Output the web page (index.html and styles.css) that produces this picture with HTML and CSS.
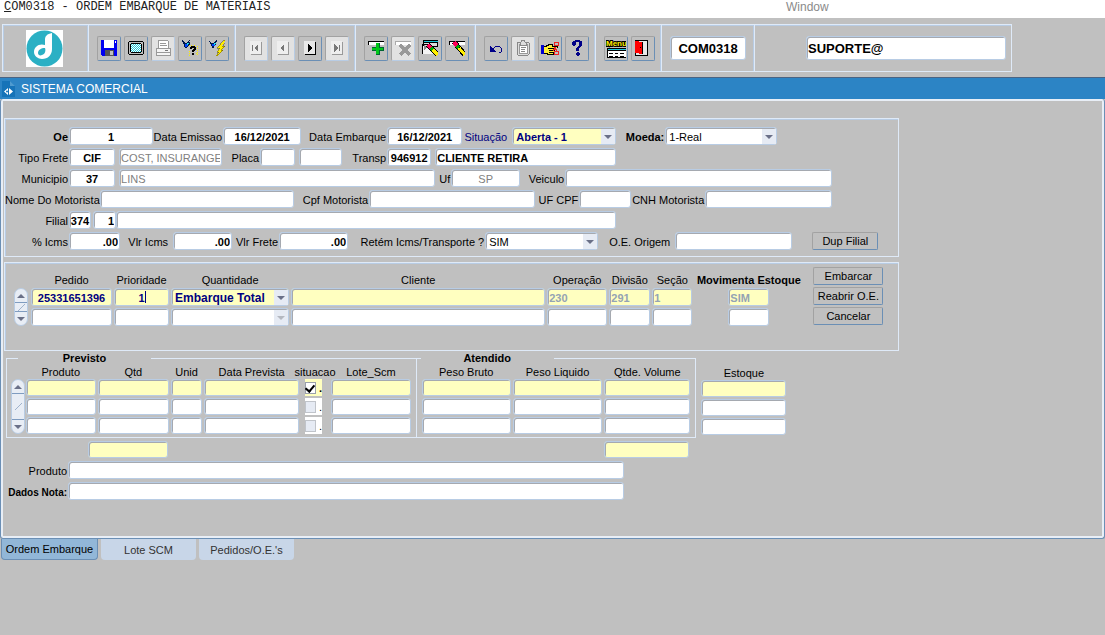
FILE: index.html
```html
<!DOCTYPE html>
<html lang="pt-BR">
<head>
    <meta charset="UTF-8">
    <meta name="viewport" content="width=device-width, initial-scale=1.0">
    <title>COM0318 - ORDEM EMBARQUE DE MATERIAIS</title>
    <link rel="stylesheet" href="styles.css">
</head>
<body>
    <header class="menubar">
        <span class="menu-title"><u>C</u>OM0318 - ORDEM EMBARQUE DE MATERIAIS</span>
        <a href="#" class="menu-window">Window</a>
    </header>

    <div class="toolbar">
        <div class="segment segment-logo">
            <svg class="logo" viewBox="0 0 37 37">
                <rect width="37" height="37" fill="#fff"/>
                <circle cx="18.500" cy="18.500" r="18" fill="#2bb0c4"/>
                <path d="M26 3c-5 1-7 3-7 7v5c-6-2-11 2-11 7 0 4 4 7 8 7 6 0 10-4 10-10V3z" fill="#fff"/>
                <path d="M19 18c-4 0-7 2-7 5 0 2 2 3 4 2 3-1 4-4 3-7z" fill="#2bb0c4"/>
            </svg>
        </div>
        <div class="segment">
            <button class="tool" aria-label="Salvar"><svg viewBox="0 0 16 16">
                <path d="M0 0h16v16H1L0 15z" fill="#0000f0"/><path d="M3 0h10v8H3z" fill="#fff"/><path d="M14 1h1v2h-1z" fill="#fff"/>
                <path d="M4 10h9v6H4z" fill="#555"/><path d="M9 11h3v4H9z" fill="#c0c0c0"/>
            </svg></button>
            <button class="tool" aria-label="Tela"><svg viewBox="0 0 16 16">
                <path d="M1 1h14v1h1v12h-1v1H1v-1H0V2h1z" fill="#000"/><path d="M1 2h14v12H1z" fill="#c0c0c0"/>
                <path d="M3 3h10v1h1v8h-1v1H3v-1H2V4h1z" fill="#000"/><path d="M3 4h10v8H3z" fill="#fff"/>
                <path d="M3 4.500h10M3 6.500h10M3 8.500h10M3 10.500h10" stroke="#20c8d8" stroke-dasharray="1 1"/>
                <path d="M4 5.500h9M4 7.500h9M4 9.500h9M4 11.500h9" stroke="#20c8d8" stroke-dasharray="1 1"/>
            </svg></button>
            <button class="tool off" aria-label="Imprimir" disabled><svg viewBox="0 0 16 16">
                <path d="M3 0h10v8H3z" fill="#fff"/><path d="M3 0h10M3 0v8M13 1v7M5 3h6M5 5h7" stroke="#999"/>
                <path d="M1 8h14v7H1z" fill="#f4f4f4" stroke="#999"/><path d="M1 12h14" stroke="#999"/><path d="M10 10h3" stroke="#777"/>
            </svg></button>
            <button class="tool" aria-label="Consulta"><svg viewBox="0 0 16 16">
                <path d="M7 5h1v1H7zM9 5h1v1H9zM12 5h1v1h-1zM15 6h1v1h-1zM15 8h1v1h-1zM15 10h1v1h-1zM15 12h1v1h-1zM15 14h1v1h-1zM7 11h1v1H7zM7 13h1v1H7zM7 15h1v1H7zM14 13h1v1h-1z" fill="#ffee00"/>
                <path d="M0 0h1v1h1v1h1v1h2V2h1V1h1V0h1v1H7v1h1v3H7v1H6v1H5v1H3V7H2V4H1V2H0z" fill="#001850"/><path d="M3 4h3v2H5v1H3z" fill="#0040ff"/><path d="M5 3h2v1H6v1H5z" fill="#19e0f0"/>
                <path d="M8 7h1V6h4v1h1v3h-1v1h-1v1h-2v-2h1V9h1V8h-2v1H8zM10 13h2v2h-2z" fill="#000"/>
            </svg></button>
            <button class="tool" aria-label="Executar"><svg viewBox="0 0 16 16">
                <path d="M0 1h1v1h1v1h3V2h1V1h1V0h1v2H7v3H6v1H5v2H3V6H2V4H1V2H0z" fill="#001850"/><path d="M3 4h3v2H3z" fill="#0040ff"/><path d="M5 3h2v1H6v1H5z" fill="#19e0f0"/>
                <path d="M15 0L8 8h3l-3 4h2l-3 4h1l6-6h-2l4-4h-3l4-6z" fill="#ffee00" stroke="#554400" stroke-width=".5"/>
            </svg></button>
        </div>
        <div class="segment">
            <button class="tool off" aria-label="Primeiro" disabled><svg viewBox="0 0 16 16">
                <path d="M3 2h11v13H3z" fill="#999"/><path d="M2 1h11v13H2z" fill="#eee"/><path d="M4 5h1v6H4zM10 4v8L6 8z" fill="#777"/>
            </svg></button>
            <button class="tool off" aria-label="Anterior" disabled><svg viewBox="0 0 16 16">
                <path d="M3 2h11v13H3z" fill="#999"/><path d="M2 1h11v13H2z" fill="#eee"/><path d="M9 4v8L5 8z" fill="#777"/>
            </svg></button>
            <button class="tool" aria-label="Próximo"><svg viewBox="0 0 16 16">
                <path d="M3 2h11v13H3z" fill="#000"/><path d="M2 1h11v13H2z" fill="#e8e8e8"/><path d="M6 4v8l4-4z" fill="#000"/>
            </svg></button>
            <button class="tool off" aria-label="Último" disabled><svg viewBox="0 0 16 16">
                <path d="M3 2h11v13H3z" fill="#999"/><path d="M2 1h11v13H2z" fill="#eee"/><path d="M10 5h1v6h-1zM5 4v8l4-4z" fill="#777"/>
            </svg></button>
        </div>
        <div class="segment">
            <button class="tool" aria-label="Inserir"><svg viewBox="0 0 16 16">
                <path d="M0 1h16v4H0z" fill="#000"/><path d="M1 2h15v3H1z" fill="#fff"/>
                <path d="M8 3h4v4h4v4h-4v4H8v-4H4V7h4z" fill="#063"/><path d="M8 3h3v5h4v2h-4v4H8v-4H4V8h4z" fill="#00c818"/>
            </svg></button>
            <button class="tool off" aria-label="Remover" disabled><svg viewBox="0 0 16 16">
                <path d="M0 1h16v4H0z" fill="#aaa"/><path d="M1 2h15v3H1z" fill="#fff"/>
                <path d="M5 5l10 10M15 5L5 15" stroke="#999" stroke-width="3"/>
            </svg></button>
            <button class="tool" aria-label="Limpar registro"><svg viewBox="0 0 16 16">
                <path d="M1 0h15v7H1z" fill="#000"/><path d="M2 1h14v1H2z" fill="#19c8dc"/><path d="M2 3h13v3H2z" fill="#ddd"/>
                <path d="M0 4h6v1H1v9H0z" fill="#000"/><path d="M1 6h10v8H1z" fill="#f4f4f4"/><path d="M2 5l4 2-4 3z" fill="#888"/>
                <path d="M6 5l10 10" stroke="#000" stroke-width="5"/><path d="M6 5l3 3" stroke="#f05" stroke-width="4"/><path d="M9 8l2 2" stroke="#0a0" stroke-width="4"/><path d="M11 10l5 5" stroke="#fe0" stroke-width="3"/>
            </svg></button>
            <button class="tool" aria-label="Limpar"><svg viewBox="0 0 16 16">
                <path d="M0 1h16v4H0z" fill="#000"/><path d="M1 2h15v3H1z" fill="#fff"/>
                <path d="M5 2l11 13" stroke="#000" stroke-width="5"/><path d="M5 2l3 4" stroke="#f05" stroke-width="4"/><path d="M8 6l2 2" stroke="#0a0" stroke-width="4"/><path d="M10 8l6 7" stroke="#fe0" stroke-width="3"/>
            </svg></button>
        </div>
        <div class="segment">
            <button class="tool" aria-label="Desfazer"><svg viewBox="0 0 16 16">
                <path d="M2 6v6h6z" fill="#008"/><path d="M4 10l4-4h3l2 2v4l-2 1" fill="none" stroke="#008" stroke-width="1"/>
            </svg></button>
            <button class="tool off" aria-label="Colar" disabled><svg viewBox="0 0 16 16">
                <rect x="2" y="2" width="12" height="13" rx="1" fill="#ddd" stroke="#888"/><path d="M4 4h8v9H4z" fill="#fff" stroke="#999"/>
                <path d="M5 2h1l1-2h2l1 2h1v3H5z" fill="#ddd" stroke="#888"/><path d="M6 7h5M6 9h4M6 11h4" stroke="#888"/>
            </svg></button>
            <button class="tool" aria-label="Recortar"><svg class="broad" viewBox="0 0 18 16">
                <path d="M0 5h3v9H0z" fill="#0000d0"/><path d="M3 6h2l2-2h4v2h5v2h-3v5l-2 2H6l-3-2z" fill="#fe3"/>
                <path d="M3 6h2V5h2V4h4v2h5v2M7 8h6v2H8M8 12h4v2H6v-1H3" fill="none" stroke="#000"/>
                <path d="M12 11l3-4M13 7l3 4" stroke="#e22"/><circle cx="15.500" cy="4" r="2" fill="none" stroke="#e22"/><circle cx="15.500" cy="13" r="2" fill="none" stroke="#e22"/>
            </svg></button>
            <button class="tool" aria-label="Ajuda"><svg viewBox="0 0 16 16">
                <path d="M4 1h2V0h5v1h2v5h-1v1h-1v1h-1v3H7V8h1V7h1V6h1V2H7v3H6v1H4V5H3V2h1zM7 13h1v-1h2v1h1v2h-1v1H8v-1H7z" fill="#008"/>
            </svg></button>
        </div>
        <div class="segment">
            <button class="tool" aria-label="Menu"><svg class="wide" viewBox="0 0 20 20">
                <text x="0" y="8" class="menu-glyph">Menu</text>
                <path d="M1 10h19v10H1z" fill="#000"/><path d="M2 11h18v1H2z" fill="#19c8dc"/><path d="M2 13h18v6H2z" fill="#fff"/>
                <path d="M3 15h4M9 15h3M14 15h4M3 18h4M9 18h3M14 18h4" stroke="#000"/>
            </svg></button>
            <button class="tool" aria-label="Sair"><svg viewBox="0 0 16 16">
                <path d="M0 0h13v16H0z" fill="#000"/><path d="M1 1h11v14H1z" fill="#e8e8e8"/><path d="M0 1l7 1v12l-7-1z" fill="#f00"/><path d="M7 2h1v12H7z" fill="#000"/><path d="M5 7h1v1H5z" fill="#000"/>
            </svg></button>
        </div>
        <div class="segment segment-code">
            <input type="text" class="field bold center" aria-label="Programa" value="COM0318">
        </div>
        <div class="segment segment-user">
            <input type="text" class="field bold" aria-label="Usuário" value="SUPORTE@">
        </div>
    </div>

    <main class="window">
        <h1 class="window-title">
            <svg class="window-icon" viewBox="0 0 13 16">
                <path d="M0 0h8l5 5v11H0z" fill="#1673b8"/><path d="M8 0v5h5z" fill="#4f9bd0"/>
                <path d="M6 7v7L2 10.500zM7 7v7l4-3.500z" fill="#fff"/><circle cx="5" cy="10.500" r="1" fill="#1673b8"/>
            </svg>
            SISTEMA COMERCIAL
        </h1>

        <form class="frame">
            <section class="group header-group">
                <div class="row row-1">
                    <label for="oe" class="strong">Oe</label>
                    <input id="oe" class="field bold center" value="1">
                    <label for="emissao">Data Emissao</label>
                    <input id="emissao" class="field bold center" value="16/12/2021">
                    <label for="embarque">Data Embarque</label>
                    <input id="embarque" class="field bold center" value="16/12/2021">
                    <label for="situacao" class="navy loose">Situação</label>
                    <span class="select"><select id="situacao" class="field bold yellow navy"><option>Aberta - 1</option></select></span>
                    <label for="moeda" class="strong">Moeda:</label>
                    <span class="select"><select id="moeda" class="field"><option>1-Real</option></select></span>
                </div>
                <div class="row row-2">
                    <label for="frete">Tipo Frete</label>
                    <input id="frete" class="field bold center" value="CIF">
                    <span></span>
                    <input class="field faded" aria-label="Descrição do frete" value="COST, INSURANGE">
                    <label for="placa">Placa</label>
                    <input id="placa" class="field">
                    <span></span>
                    <input class="field" aria-label="UF da placa">
                    <label for="transp">Transp</label>
                    <input id="transp" class="field bold center" value="946912">
                    <span></span>
                    <input class="field bold" aria-label="Nome da transportadora" value="CLIENTE RETIRA">
                </div>
                <div class="row row-3">
                    <label for="municipio">Municipio</label>
                    <input id="municipio" class="field bold center" value="37">
                    <span></span>
                    <input class="field faded" aria-label="Nome do municipio" value="LINS">
                    <label for="uf">Uf</label>
                    <input id="uf" class="field faded center" value="SP">
                    <label for="veiculo">Veiculo</label>
                    <input id="veiculo" class="field">
                </div>
                <div class="row row-4">
                    <label for="motorista">Nome Do Motorista</label>
                    <input id="motorista" class="field">
                    <label for="cpf">Cpf Motorista</label>
                    <input id="cpf" class="field">
                    <label for="ufcpf">UF CPF</label>
                    <input id="ufcpf" class="field">
                    <label for="cnh">CNH Motorista</label>
                    <input id="cnh" class="field">
                </div>
                <div class="row row-5">
                    <label for="filial">Filial</label>
                    <input id="filial" class="field bold center snug" value="374">
                    <span></span>
                    <input class="field bold right" aria-label="Sub filial" value="1">
                    <input class="field" aria-label="Nome da filial">
                </div>
                <div class="row row-6">
                    <label for="icms">% Icms</label>
                    <input id="icms" class="field bold right" value=".00">
                    <label for="vlricms" class="loose">Vlr Icms</label>
                    <input id="vlricms" class="field bold right" value=".00">
                    <label for="vlrfrete">Vlr Frete</label>
                    <input id="vlrfrete" class="field bold right" value=".00">
                    <label for="retem">Retém Icms/Transporte ?</label>
                    <span class="select"><select id="retem" class="field"><option>SIM</option></select></span>
                    <label for="origem" class="loose">O.E. Origem</label>
                    <input id="origem" class="field">
                    <span></span>
                    <button type="button" class="btn">Dup Filial</button>
                </div>
            </section>

            <section class="group order-group">
                <div class="scroll">
                    <button type="button" class="up" aria-label="Subir"></button>
                    <span class="grip"></span>
                    <button type="button" class="down" aria-label="Descer"></button>
                </div>
                <table class="sheet orders">
                    <thead>
                        <tr><th>Pedido</th><th>Prioridade</th><th>Quantidade</th><th>Cliente</th><th>Operação</th><th>Divisão</th><th>Seção</th><th class="strong">Movimenta Estoque</th></tr>
                    </thead>
                    <tbody>
                        <tr>
                            <td><input class="field yellow navy bold center" aria-label="Pedido" value="25331651396"></td>
                            <td><span class="caret-box"><input class="field yellow navy bold center" aria-label="Prioridade" value="1"></span></td>
                            <td><span class="select"><select class="field yellow navy bold big" aria-label="Quantidade"><option>Embarque Total</option></select></span></td>
                            <td><input class="field yellow" aria-label="Cliente"></td>
                            <td><input class="field yellow dim" aria-label="Operação" value="230"></td>
                            <td><input class="field yellow dim" aria-label="Divisão" value="291"></td>
                            <td><input class="field yellow dim" aria-label="Seção" value="1"></td>
                            <td><input class="field yellow dim short" aria-label="Movimenta Estoque" value="SIM"></td>
                        </tr>
                        <tr>
                            <td><input class="field" aria-label="Pedido"></td>
                            <td><input class="field" aria-label="Prioridade"></td>
                            <td><span class="select select-off"><select class="field" aria-label="Quantidade"><option></option></select></span></td>
                            <td><input class="field" aria-label="Cliente"></td>
                            <td><input class="field" aria-label="Operação"></td>
                            <td><input class="field" aria-label="Divisão"></td>
                            <td><input class="field" aria-label="Seção"></td>
                            <td><input class="field short" aria-label="Movimenta Estoque"></td>
                        </tr>
                    </tbody>
                </table>
                <div class="actions">
                    <button type="button" class="btn">Embarcar</button>
                    <button type="button" class="btn">Reabrir O.E.</button>
                    <button type="button" class="btn">Cancelar</button>
                </div>
            </section>

            <section class="items">
                <fieldset class="planned">
                    <legend><span>Previsto</span></legend>
                    <div class="planned-body">
                        <div class="scroll">
                            <button type="button" class="up" aria-label="Subir"></button>
                            <span class="grip"></span>
                            <button type="button" class="down" aria-label="Descer"></button>
                        </div>
                        <table class="sheet plan-sheet">
                            <thead>
                                <tr><th>Produto</th><th>Qtd</th><th>Unid</th><th>Data Prevista</th><th>situacao</th><th>Lote_Scm</th></tr>
                            </thead>
                            <tbody>
                                <tr>
                                    <td><input class="field yellow" aria-label="Produto"></td>
                                    <td><input class="field yellow" aria-label="Qtd"></td>
                                    <td><input class="field yellow" aria-label="Unid"></td>
                                    <td><input class="field yellow" aria-label="Data Prevista"></td>
                                    <td><label class="tick yellow"><input type="checkbox" aria-label="situacao" checked><b>.</b></label></td>
                                    <td><input class="field yellow" aria-label="Lote_Scm"></td>
                                </tr>
                                <tr>
                                    <td><input class="field" aria-label="Produto"></td>
                                    <td><input class="field" aria-label="Qtd"></td>
                                    <td><input class="field" aria-label="Unid"></td>
                                    <td><input class="field" aria-label="Data Prevista"></td>
                                    <td><label class="tick"><input type="checkbox" aria-label="situacao" disabled>.</label></td>
                                    <td><input class="field" aria-label="Lote_Scm"></td>
                                </tr>
                                <tr>
                                    <td><input class="field" aria-label="Produto"></td>
                                    <td><input class="field" aria-label="Qtd"></td>
                                    <td><input class="field" aria-label="Unid"></td>
                                    <td><input class="field" aria-label="Data Prevista"></td>
                                    <td><label class="tick"><input type="checkbox" aria-label="situacao" disabled>.</label></td>
                                    <td><input class="field" aria-label="Lote_Scm"></td>
                                </tr>
                            </tbody>
                        </table>
                    </div>
                </fieldset>
                <fieldset class="served">
                    <legend><span>Atendido</span></legend>
                    <table class="sheet served-sheet">
                        <thead>
                            <tr><th>Peso Bruto</th><th>Peso Liquido</th><th>Qtde. Volume</th></tr>
                        </thead>
                        <tbody>
                            <tr>
                                <td><input class="field yellow" aria-label="Peso Bruto"></td>
                                <td><input class="field yellow" aria-label="Peso Liquido"></td>
                                <td><input class="field yellow" aria-label="Qtde. Volume"></td>
                            </tr>
                            <tr>
                                <td><input class="field" aria-label="Peso Bruto"></td>
                                <td><input class="field" aria-label="Peso Liquido"></td>
                                <td><input class="field" aria-label="Qtde. Volume"></td>
                            </tr>
                            <tr>
                                <td><input class="field" aria-label="Peso Bruto"></td>
                                <td><input class="field" aria-label="Peso Liquido"></td>
                                <td><input class="field" aria-label="Qtde. Volume"></td>
                            </tr>
                        </tbody>
                    </table>
                </fieldset>
                <table class="sheet stock-sheet">
                    <thead>
                        <tr><th>Estoque</th></tr>
                    </thead>
                    <tbody>
                        <tr><td><input class="field yellow" aria-label="Estoque"></td></tr>
                        <tr><td><input class="field" aria-label="Estoque"></td></tr>
                        <tr><td><input class="field" aria-label="Estoque"></td></tr>
                    </tbody>
                </table>
            </section>

            <section class="footer-fields">
                <div class="row row-totals">
                    <span></span>
                    <input class="field yellow" aria-label="Total Qtd">
                    <span></span>
                    <input class="field yellow" aria-label="Total Volume">
                </div>
                <div class="row row-note">
                    <label for="produto">Produto</label>
                    <input id="produto" class="field">
                </div>
                <div class="row row-note">
                    <label for="nota" class="strong tiny">Dados Nota:</label>
                    <input id="nota" class="field">
                </div>
            </section>
        </form>

        <nav class="tabs">
            <button type="button" class="tab active">Ordem Embarque</button>
            <button type="button" class="tab">Lote SCM</button>
            <button type="button" class="tab">Pedidos/O.E.'s</button>
        </nav>
    </main>
</body>
</html>
```

FILE: styles.css
```css
* {
    box-sizing: border-box;
}
body {
    margin: 0;
    background: #c0c0c0;
    color: #000;
    font-family: "Liberation Sans", Arial, sans-serif;
    font-size: 11px;
}
input, select, button {
    font: inherit;
    color: inherit;
    margin: 0;
}

/* menu bar */
.menubar {
    display: grid;
    grid-template-columns: 782fr 319fr;
    height: 18px;
    padding-left: 4px;
    background: #fff;
    line-height: 14px;
}
.menu-title {
    font-family: "Liberation Mono", "Courier New", monospace;
    font-size: 12px;
    white-space: nowrap;
    color: #222;
}
.menu-window {
    color: #8a8a8a;
    font-size: 12px;
    text-decoration: none;
}

/* toolbar */
.toolbar {
    display: flex;
    width: fit-content;
    height: 48px;
    margin: 6px 0 5px 2px;
    border: 1px solid #dfeaf8;
    box-shadow: inset 1px 1px 0 #b8cce4;
}
.segment {
    display: flex;
    align-items: center;
    gap: 3px;
    padding: 0 6px 0 8px;
    border-right: 1px solid #dfeaf8;
    box-shadow: inset -1px 0 0 #b8cce4;
}
.segment:last-child {
    border-right: none;
    box-shadow: none;
}
.segment-logo {
    padding: 0 25px 0 23px;
}
.logo {
    width: 37px;
    height: 37px;
}
.tool {
    display: flex;
    align-items: center;
    justify-content: center;
    width: 24px;
    height: 25px;
    padding: 0;
    background: #c0c0c0;
    border: 1px solid #a2a2a2;
    border-right-color: #6b8fb5;
    border-bottom-color: #6b8fb5;
    border-radius: 2px;
}
.tool.off {
    background: #e2e2e2;
    border-right-color: #b8cce4;
    border-bottom-color: #b8cce4;
}
.tool svg {
    flex: none;
    width: 16px;
    height: 16px;
    shape-rendering: crispEdges;
}
.tool svg.broad {
    width: 18px;
}
.tool svg.wide {
    width: 20px;
    height: 20px;
}
.menu-glyph {
    font-size: 8px;
    font-weight: bold;
    fill: #ffee00;
    stroke: #000;
    stroke-width: 2px;
    paint-order: stroke;
}
.segment-code {
    padding: 0 8px;
}
.segment-code .field {
    width: 76px;
    height: 24px;
    font-size: 13px;
}
.segment-user {
    padding: 0 5px 0 51px;
}
.segment-user .field {
    width: 200px;
    height: 24px;
    font-size: 13px;
}

/* window */
.window-title {
    display: flex;
    align-items: center;
    gap: 6px;
    height: 22px;
    margin: 0;
    padding-left: 2px;
    background: #2c84c5;
    border-top: 1px solid #4a6484;
    color: #fff;
    font-size: 12px;
    font-weight: normal;
}
.window-icon {
    width: 13px;
    height: 16px;
}
.frame {
    padding: 19px 0 38px 3px;
    border: 1px solid #6b8fb5;
    border-top: none;
    border-radius: 3px;
    box-shadow: inset 0 0 0 2px #e8eef6;
}
.group {
    width: 895px;
    width: 81.4%;
    border: 1px solid #dfeaf8;
    box-shadow: inset 1px 1px 0 #b8cce4;
}
.header-group {
    display: flex;
    flex-direction: column;
    gap: 3px;
    padding: 8px 0 6px;
}
.row {
    display: grid;
    align-items: center;
}
.row > * {
    min-width: 0;
}
.row-1 { grid-template-columns: 64fr 84fr 70fr 78fr 86fr 75fr 50fr 104fr 49fr 112fr 121fr; }
.row-2 { grid-template-columns: 64fr 46fr 4fr 103fr 38fr 35fr 4fr 43fr 45fr 44fr 4fr 181fr 282fr; }
.row-3 { grid-template-columns: 64fr 46fr 4fr 316fr 16fr 69fr 45fr 267fr 66fr; }
.row-4 { grid-template-columns: 95fr 194fr 75fr 166fr 44fr 52fr 74fr 127fr 66fr; }
.row-5 { grid-template-columns: 64fr 22fr 2fr 23fr 500fr 282fr; }
.row-6 { grid-template-columns: 64fr 51fr 53fr 59fr 47fr 69fr 137fr 113fr 77fr 117fr 20fr 66fr 20fr; }
.row label {
    padding: 2px 1px 0 0;
    text-align: right;
    white-space: nowrap;
}
.row label.loose {
    padding-right: 5px;
}
.strong {
    font-weight: bold;
}
.tiny {
    font-size: 10px;
}

/* fields */
.field {
    display: block;
    width: 100%;
    min-width: 0;
    height: 18px;
    padding: 1px 1px 0;
    background: #fff;
    border: 1px solid #b8cce4;
    border-radius: 3px;
    box-shadow: inset 1px 1px 0 #a5a9b0;
    outline: none;
}
.field.snug {
    padding: 1px 0 0;
}
.bold {
    font-weight: bold;
}
.center {
    text-align: center;
}
.right {
    text-align: right;
}
.navy {
    color: #000080;
}
.yellow {
    background: #ffffc0;
}
.faded {
    color: #808080;
    font-weight: normal;
}
.dim {
    color: #94a3b3;
    font-weight: bold;
}
.big {
    font-size: 12px;
}
.select {
    display: block;
    position: relative;
}
.select select {
    appearance: none;
    padding: 1px 18px 0 3px;
}
.select::before {
    content: "";
    position: absolute;
    top: 2px;
    right: 1px;
    bottom: 1px;
    width: 14px;
    background: #e6ebf4;
}
.select::after {
    content: "";
    position: absolute;
    top: 8px;
    right: 4px;
    border: 4px solid transparent;
    border-top-color: #6a7088;
    border-bottom: none;
}
.select-off::after {
    border-top-color: #b4b8c0;
}
.btn {
    height: 18px;
    padding: 0;
    background: #c0c0c0;
    border: 1px solid #a2a2a2;
    border-right-color: #6b8fb5;
    border-bottom-color: #6b8fb5;
    border-radius: 2px;
    white-space: nowrap;
}

/* scroll strips */
.scroll {
    display: flex;
    flex-direction: column;
    width: 14px;
    border: 1px solid #b8cce4;
    border-radius: 7px;
    background: #e8edf5;
    overflow: hidden;
}
.scroll button {
    display: flex;
    align-items: center;
    justify-content: center;
    height: 13px;
    padding: 0;
    border: none;
    background: none;
}
.scroll button::before {
    content: "";
    border: 4px solid transparent;
}
.scroll .up::before {
    border-top: none;
    border-bottom-color: #6a7088;
}
.scroll .down::before {
    border-bottom: none;
    border-top-color: #6a7088;
}
.grip {
    flex: 1;
    border: solid #7f9cc0;
    border-width: 1px 0;
    background: linear-gradient(135deg, transparent 47%, #9fb2cc 47%, #9fb2cc 53%, transparent 53%) center / 7px 7px no-repeat;
}

/* tables */
.sheet {
    display: block;
}
.sheet thead, .sheet tbody {
    display: grid;
    row-gap: 2px;
}
.sheet tr {
    display: grid;
}
.sheet th {
    display: flex;
    justify-content: center;
    min-width: 0;
    padding: 0;
    font-weight: normal;
    line-height: 14px;
    white-space: nowrap;
}
.sheet th.strong {
    font-weight: bold;
}
.sheet td {
    min-width: 0;
    padding: 0 1px;
}
.order-group {
    display: flex;
    align-items: flex-start;
    height: 89px;
    margin-top: 5px;
    padding: 4px 15px 0 9px;
}
.order-group .scroll {
    height: 38px;
    margin: 21px 2px 0 0;
}
.orders {
    flex: 1;
    padding-top: 6px;
}
.orders thead {
    padding-bottom: 1px;
}
.orders tr {
    grid-template-columns: 83fr 57fr 120fr 256fr 62fr 43fr 42fr 111fr;
}
.short {
    width: 41px;
    margin: 0 auto;
}
.caret-box {
    display: block;
    position: relative;
}
.caret-box::after {
    content: "";
    position: absolute;
    top: 3px;
    bottom: 3px;
    left: calc(50% + 3px);
    width: 1px;
    background: #000080;
}
.actions {
    display: flex;
    flex-direction: column;
    gap: 2px;
    width: 70px;
    margin-left: 9px;
}

/* items */
.items {
    display: grid;
    grid-template-columns: 409fr 280fr 91fr 316fr;
    margin: 1px 0 0 2px;
}
fieldset {
    min-width: 0;
    margin: 0;
    padding: 0 4px 3px;
    border: 1px solid #dfeaf8;
    border-right: none;
}
fieldset + fieldset {
    border-right: 1px solid #dfeaf8;
}
legend {
    width: 133px;
    margin-left: 7px;
    padding: 0;
    font-weight: bold;
    line-height: 13px;
}
legend span {
    display: block;
    text-align: center;
}
.served legend {
    margin-left: 0;
}
.planned-body {
    display: flex;
}
.planned-body .scroll {
    margin-top: 14px;
}
.items .field {
    height: 17px;
}
.plan-sheet {
    flex: 1;
}
.plan-sheet tr {
    grid-template-columns: 71fr 73fr 33fr 96fr 30fr 81fr;
}
.served-sheet tr {
    grid-template-columns: 91fr 92fr 88fr;
}
.stock-sheet {
    padding: 14px 0 0 4px;
}
.tick {
    display: flex;
    align-items: center;
    gap: 3px;
    width: 17px;
    height: 17px;
    margin-left: 4px;
    background: #fff;
    overflow: hidden;
}
.tick.yellow {
    background: #ffffc0;
}
.tick input {
    flex: none;
    appearance: none;
    width: 11px;
    height: 12px;
    background: #fff;
    border: 1px solid #9aa0aa;
}
.tick input:disabled {
    background: #e6ebf4;
    border-color: #c0c4ca;
}
.tick input:checked::before {
    content: "";
    display: block;
    width: 4px;
    height: 7px;
    margin: 0 auto;
    border: solid #000;
    border-width: 0 2px 2px 0;
    transform: rotate(40deg);
}

/* footer */
.footer-fields {
    display: grid;
    row-gap: 3px;
    margin: 3px 0 0 2px;
}
.row-totals { grid-template-columns: 82fr 80fr 435fr 85fr 414fr; }
.row-note { grid-template-columns: 62fr 555fr 479fr; }
.row-totals .field {
    height: 17px;
}

/* tabs */
.tabs {
    display: flex;
    gap: 3px;
    padding-left: 1px;
}
.tab {
    width: 95px;
    height: 21px;
    padding: 0;
    background: #c8d6e8;
    border: none;
    border-radius: 0 0 4px 4px;
    color: #333;
}
.tab.active {
    width: 97px;
    background: #92b7d8;
    border: 1px solid #6b8fb5;
    border-top: none;
    color: #000;
}
```
